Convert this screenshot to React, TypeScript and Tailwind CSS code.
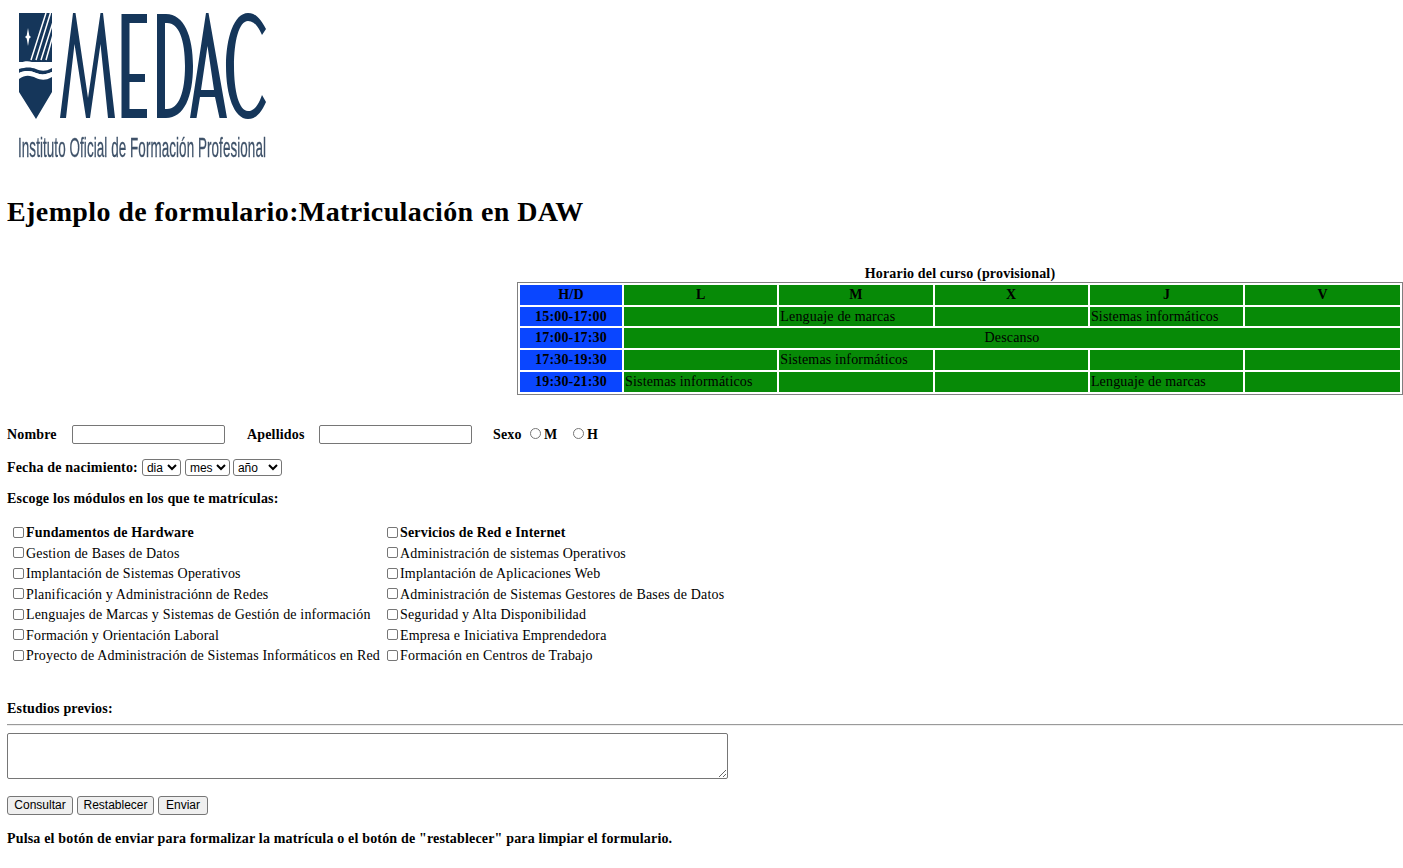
import React from "react";

const navy = "#15365a";
const Logo = () => (
  <svg width="270" height="170" viewBox="7 0 270 170" className="block overflow-visible blur-[0.5px]">
    <path d="M19 13H52V62H19Z" fill={navy} />
    <path d="M46 13L31 60M50.500 13L36 60M53 22L41 60M53 35L46 60" stroke="#fff" strokeWidth="1.5" fill="none" />
    <path d="M28 28L29.3 35.500L31 37L29.300 38.500L28 46L26.700 38.500L25 37L26.700 35.500Z" fill="#fff" />
    <path d="M19 63C27 60 31 61 36 64S45 67 52 62V68C45 72 41 71 36 69S26 67 19 69Z" fill="#fff" />
    <path d="M19 69C26 67 31 67 36 69S45 72 52 68V72C45 75 41 75 36 73S26 70 19 73Z" fill={navy} />
    <path d="M19 73C26 70 31 71 36 73S45 75 52 72V77C45 81 41 80 36 78S26 74 19 79Z" fill="#fff" />
    <path d="M19 79C26 74 31 76 36 78S45 81 52 77V92L36 119L19 92Z" fill={navy} />
    <path d="M60 118L73 13H75.500L88 98L100.500 13H103L115 118H108L100.500 44L90 118H86L74.500 44L66 118Z" fill={navy} />
    <path d="M121.500 14H147V23H129.500V74H145V82H129.500V109H147V118H121.500Z" fill={navy} />
    <path d="M157 14H166C184 14 193 36 193 66C193 97 184 118 166 118H157ZM165 23V109H167C179 109 185 92 185 66C185 40 179 23 167 23Z" fill={navy} />
    <path d="M190 118L206 13H208.500L227 118H219.500L215 97H200L196.500 118ZM201 90H214L207.500 46Z" fill={navy} />
    <path d="M266 29C260 18 255 13 248 13C234 13 226 38 226 66C226 95 234 119 248 119C256 119 261 113 266 102L262 95C258 106 254 111 248 111C239 111 234 91 234 66C234 41 239 21 248 21C254 21 258 26 262 35Z" fill={navy} />
    <text x="18" y="157" textLength="248" lengthAdjust="spacingAndGlyphs" fontFamily="'Liberation Sans', sans-serif" fontSize="28" fill="#3f5269" stroke="#3f5269" strokeWidth="0.3">Instituto Oficial de Formación Profesional</text>
  </svg>
);

const left = [
  "Gestion de Bases de Datos",
  "Implantación de Sistemas Operativos",
  "Planificación y Administraciónn de Redes",
  "Lenguajes de Marcas y Sistemas de Gestión de información",
  "Formación y Orientación Laboral",
  "Proyecto de Administración de Sistemas Informáticos en Red",
];
const right = [
  "Administración de sistemas Operativos",
  "Implantación de Aplicaciones Web",
  "Administración de Sistemas Gestores de Bases de Datos",
  "Seguridad y Alta Disponibilidad",
  "Empresa e Iniciativa Emprendedora",
  "Formación en Centros de Trabajo",
];

const Cb = () => (
  <input type="checkbox" className="appearance-none m-0 ml-[6px] mr-[2px] w-[11px] h-[11px] relative top-[-1px] border border-[#767676] rounded-[2px] bg-white" />
);
const Radio = () => (
  <input type="radio" name="sexo" className="appearance-none m-0 mr-[3px] w-[11px] h-[11px] relative top-[-1px] border border-[#767676] rounded-full bg-white" />
);

const td = "bg-[#078a07] p-0 pl-[1px] whitespace-nowrap text-[14px] leading-[16px] text-left";
const tdc = "bg-[#078a07] p-0 whitespace-nowrap text-[14px] leading-[16px] text-center";
const hd = "bg-[#0a46ff] p-0 font-bold text-center text-[14px] leading-[16px]";
const th = "bg-[#078a07] p-0 font-bold text-center text-[14px] leading-[16px]";

const Input = () => (
  <input type="text" className="w-[153px] h-[19px] border border-[#767676] rounded-[2px] bg-white" />
);
const Sel = ({ label, w }: { label: string; w: string }) => (
  <select className={`appearance-auto ${w} h-[17px] p-0 border border-[#767676] rounded-[3px] bg-white text-[12px] tracking-normal font-normal leading-none font-['Liberation_Sans',sans-serif]`}>
    <option>{label}</option>
  </select>
);
const Btn = ({ label, w }: { label: string; w: string }) => (
  <button className={`${w} h-[19px] p-0 border border-[#767676] rounded-[3px] bg-[#efefef] text-[12px] tracking-normal leading-none font-['Liberation_Sans',sans-serif] text-black`}>
    {label}
  </button>
);

export default function App() {
  return (
    <div className="font-['Liberation_Serif','Times_New_Roman',serif] text-black text-[14px] leading-[16px] tracking-[0.17px] bg-white h-[868px] overflow-hidden pl-[7px]">
      <Logo />
      <h1 className="text-[28px] leading-[32px] font-bold mt-[26px] tracking-[0.4px]">Ejemplo de formulario:Matriculación en DAW</h1>

      <div className="flex justify-end mt-[38px]">
        <table className="w-[886px] table-fixed border-separate border-spacing-[2px] border border-[#808080]">
          <caption className="font-bold text-[14px] leading-[16px]">Horario del curso (provisional)</caption>
          <colgroup>
            <col className="w-[102px]" />
            <col className="w-[153.3px]" />
            <col className="w-[153.3px]" />
            <col className="w-[153.3px]" />
            <col className="w-[153.3px]" />
            <col />
          </colgroup>
          <tbody>
            <tr className="h-[20px]">
              <td className={hd}>H/D</td>
              {["L", "M", "X", "J", "V"].map((d) => (
                <td key={d} className={th}>{d}</td>
              ))}
            </tr>
            <tr className="h-[19px]">
              <td className={hd}>15:00-17:00</td>
              <td className={td}></td>
              <td className={td}>Lenguaje de marcas</td>
              <td className={td}></td>
              <td className={td}>Sistemas informáticos</td>
              <td className={td}></td>
            </tr>
            <tr className="h-[20px]">
              <td className={hd}>17:00-17:30</td>
              <td colSpan={5} className={tdc}>Descanso</td>
            </tr>
            <tr className="h-[20px]">
              <td className={hd}>17:30-19:30</td>
              <td className={td}></td>
              <td className={td}>Sistemas informáticos</td>
              <td className={td}></td>
              <td className={td}></td>
              <td className={td}></td>
            </tr>
            <tr className="h-[20px]">
              <td className={hd}>19:30-21:30</td>
              <td className={td}>Sistemas informáticos</td>
              <td className={td}></td>
              <td className={td}></td>
              <td className={td}>Lenguaje de marcas</td>
              <td className={td}></td>
            </tr>
          </tbody>
        </table>
      </div>

      <div className="flex items-center mt-[30px] h-[19px] font-bold">
        <span className="w-[65px]">Nombre</span>
        <Input />
        <span className="ml-[22px] w-[72px]">Apellidos</span>
        <Input />
        <span className="ml-[21px] w-[37px]">Sexo</span>
        <Radio />
        <span className="w-[29px]">M</span>
        <Radio />
        <span>H</span>
      </div>

      <div className="flex items-center gap-[4px] mt-[15px] h-[17px] font-bold">
        <span>Fecha de nacimiento:</span>
        <Sel label="dia" w="w-[39px]" />
        <Sel label="mes" w="w-[45px]" />
        <Sel label="año" w="w-[49px] ml-[-1px]" />
      </div>

      <p className="font-bold mt-[15px]">Escoge los módulos en los que te matrículas:</p>

      <div className="grid grid-cols-[374px_1fr] mt-[16px]">
        <div className="flex items-center h-[20.5px] font-bold"><Cb />Fundamentos de Hardware</div>
        <div className="flex items-center h-[20.5px] font-bold"><Cb />Servicios de Red e Internet</div>
        {left.map((l, i) => (
          <React.Fragment key={l}>
            <div className="flex items-center h-[20.5px] whitespace-nowrap"><Cb />{l}</div>
            <div className="flex items-center h-[20.5px] whitespace-nowrap"><Cb />{right[i]}</div>
          </React.Fragment>
        ))}
      </div>

      <p className="font-bold mt-[34px]">Estudios previos:</p>
      <hr className="mt-[7px] border-0 border-t border-t-[#9a9a9a] border-b border-b-[#eeeeee]" />
      <textarea className="block mt-[7px] w-[721px] h-[46px] border border-[#767676] rounded-[2px] bg-white resize-y" />

      <div className="flex gap-[4px] mt-[17px]">
        <Btn label="Consultar" w="w-[66px]" />
        <Btn label="Restablecer" w="w-[77px]" />
        <Btn label="Enviar" w="w-[50px]" />
      </div>

      <p className="font-bold mt-[16px]">Pulsa el botón de enviar para formalizar la matrícula o el botón de "restablecer" para limpiar el formulario.</p>
    </div>
  );
}
